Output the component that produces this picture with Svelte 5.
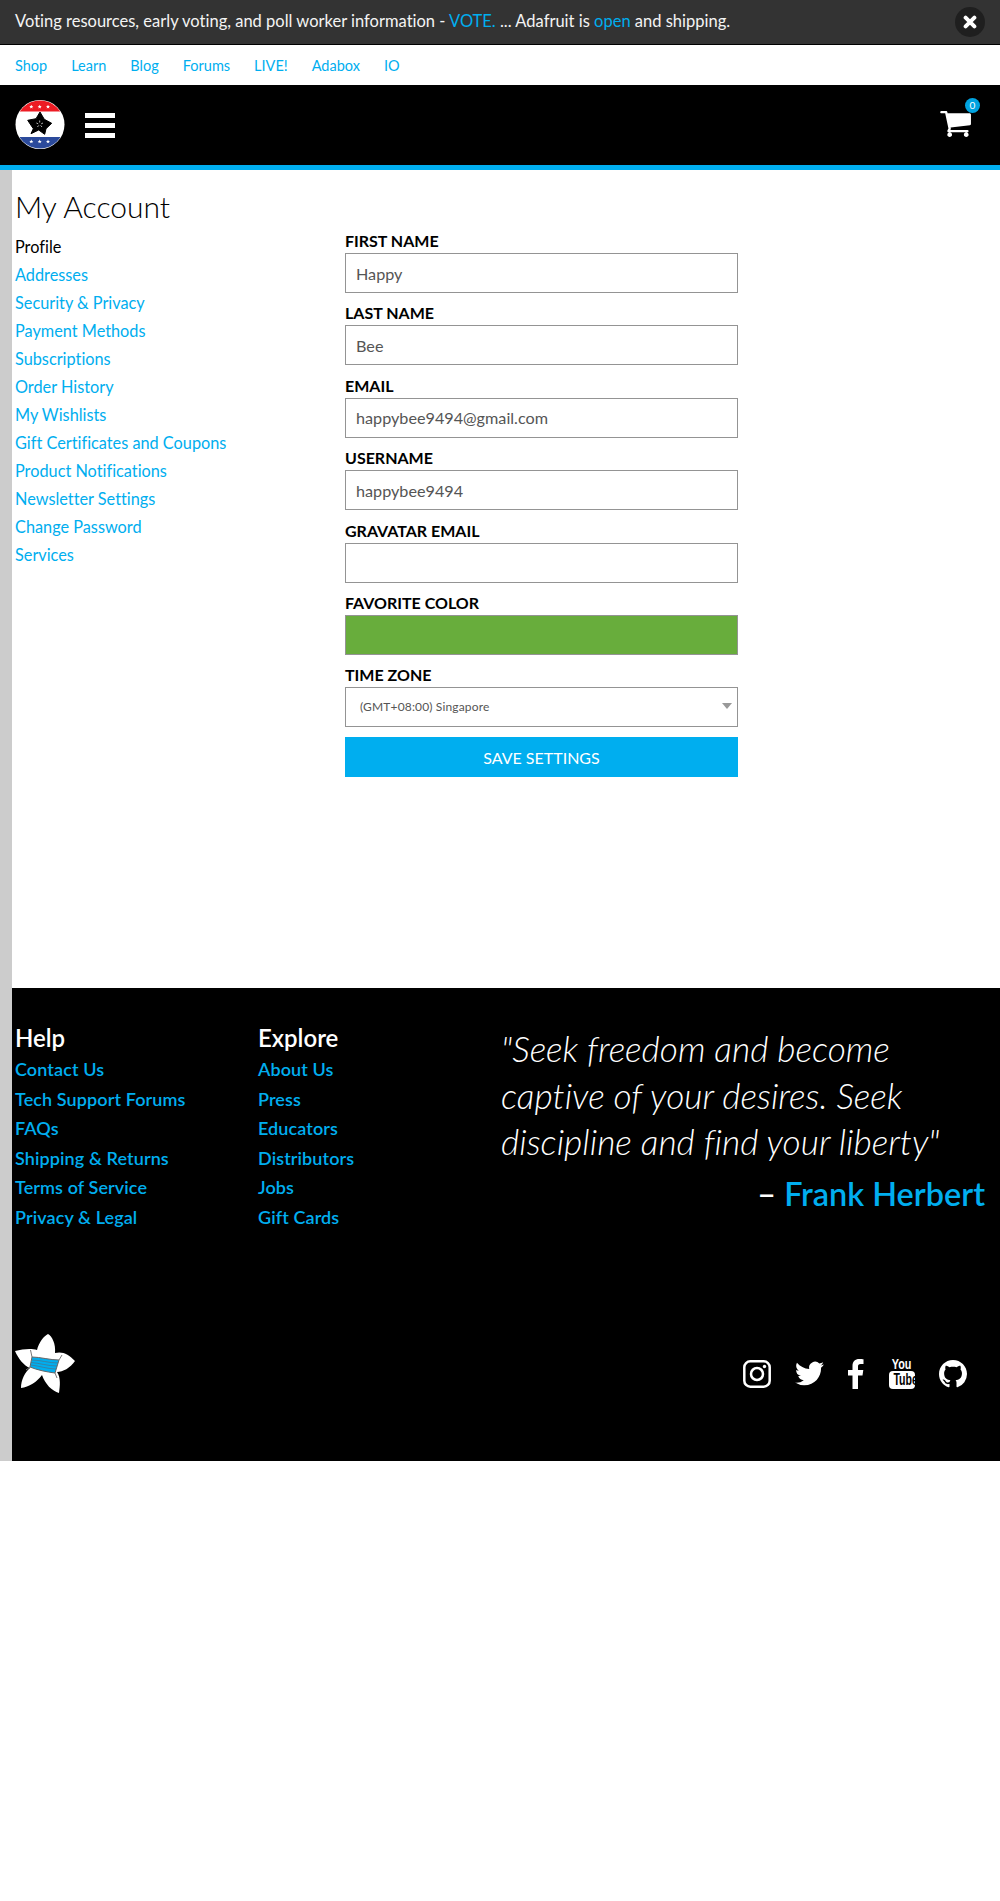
<script>
	const topLinks = ['Shop', 'Learn', 'Blog', 'Forums', 'LIVE!', 'Adabox', 'IO'];
	const accountLinks = ['Addresses', 'Security & Privacy', 'Payment Methods', 'Subscriptions', 'Order History', 'My Wishlists', 'Gift Certificates and Coupons', 'Product Notifications', 'Newsletter Settings', 'Change Password', 'Services'];
	const fields = [
		{ label: 'FIRST NAME', value: 'Happy' },
		{ label: 'LAST NAME', value: 'Bee' },
		{ label: 'EMAIL', value: 'happybee9494@gmail.com' },
		{ label: 'USERNAME', value: 'happybee9494' },
		{ label: 'GRAVATAR EMAIL', value: '' }
	];
	const help = ['Contact Us', 'Tech Support Forums', 'FAQs', 'Shipping & Returns', 'Terms of Service', 'Privacy & Legal'];
	const explore = ['About Us', 'Press', 'Educators', 'Distributors', 'Jobs', 'Gift Cards'];
	// little stars on the badge bands
	const badgeStars = [[16.3, 6.7], [24.7, 6.7], [33, 6.7], [16.3, 41.5], [24.7, 41.5], [33, 41.5]];
</script>

<div class="banner">
	<p>Voting resources, early voting, and poll worker information - <a href="#vote">VOTE.</a> ... Adafruit is <a href="#open">open</a> and shipping.</p>
	<button class="close" aria-label="Close">
		<svg viewBox="0 0 16 16" width="14" height="14"><path d="M3 3 L13 13 M13 3 L3 13" stroke="#fff" stroke-width="4.500" stroke-linecap="round" /></svg>
	</button>
</div>

<nav class="top-nav">
	{#each topLinks as link}
		<a href="#top">{link}</a>
	{/each}
</nav>

<header class="header">
	<svg class="badge" viewBox="0 0 50 50" width="50" height="50">
		<defs><clipPath id="disc"><circle cx="25" cy="24.500" r="24" /></clipPath></defs>
		<circle cx="25" cy="24.500" r="24.500" fill="#fff" />
		<g clip-path="url(#disc)">
			<rect width="50" height="11.500" fill="#ed1c24" />
			<rect y="37" width="50" height="13" fill="#2b4a9b" />
		</g>
		{#each badgeStars as [x, y]}
			<polygon transform="translate({x} {y})" fill="#fff" points="0,-2 .6,-.6 2,-.6 .9,.4 1.300,1.800 0,1 -1.300,1.800 -.9,.4 -2,-.6 -.6,-.6" />
		{/each}
		<path d="M25 12 L29.300 19.300 L36.700 23.300 L31 28.700 L29.700 34.300 L23.700 30 L16 33.700 L18.300 28.700 L12.700 20.300 L21 18.700 Z" fill="#000" stroke="#000" stroke-width="1" stroke-linejoin="round" />
		<path d="M24.700 20.500 V22.500 M28 23 L26.200 23.800 M27 27 L25.600 25.400 M22.400 27 L23.800 25.400 M21.400 23 L23.200 23.800" fill="none" stroke="#fff" stroke-width=".7" />
	</svg>
	<div class="burger"><span></span><span></span><span></span></div>
	<div class="cart">
		<svg viewBox="0 256 1728 1408" width="32" height="26"><path fill="#fff" d="M704 1536q0 52-38 90t-90 38-90-38-38-90 38-90 90-38 90 38 38 90zm896 0q0 52-38 90t-90 38-90-38-38-90 38-90 90-38 90 38 38 90zm128-1088v512q0 24-16.500 42.500t-40.500 21.500l-1044 122q13 60 13 70 0 16-24 64h920q26 0 45 19t19 45-19 45-45 19h-1024q-26 0-45-19t-19-45q0-11 8-31.500t16-36 21.500-40 15.500-29.500l-177-823h-204q-26 0-45-19t-19-45 19-45 45-19h256q16 0 28.500 6.500t19.500 15.500 13 24.500 8 26 5.500 29.500 4.500 26h1201q26 0 45 19t19 45z" /></svg>
		<span class="count">0</span>
	</div>
</header>

<div class="page">
	<main class="account">
		<h1>My Account</h1>
		<div class="columns">
			<ul class="side">
				<li class="current">Profile</li>
				{#each accountLinks as link}
					<li><a href="#account">{link}</a></li>
				{/each}
			</ul>
			<form class="form">
				{#each fields as field}
					<div class="field">
						<label>{field.label}<input value={field.value} /></label>
					</div>
				{/each}
				<div class="field">
					<span class="label">FAVORITE COLOR</span>
					<div class="swatch"></div>
				</div>
				<div class="field">
					<span class="label">TIME ZONE</span>
					<div class="select">(GMT+08:00) Singapore<i class="arrow"></i></div>
				</div>
				<button type="button" class="save">SAVE SETTINGS</button>
			</form>
		</div>
	</main>

	<footer class="footer">
		<div class="foot-top">
			<div class="foot-col">
				<h3>Help</h3>
				{#each help as link}<a href="#help">{link}</a>{/each}
			</div>
			<div class="foot-col">
				<h3>Explore</h3>
				{#each explore as link}<a href="#explore">{link}</a>{/each}
			</div>
			<div class="quote">
				<p>"Seek freedom and become captive of your desires. Seek discipline and find your liberty"</p>
				<div class="author">– <a href="#herbert">Frank Herbert</a></div>
			</div>
		</div>
		<div class="foot-bottom">
			<svg class="flower" viewBox="0 0 60 60" width="60" height="60">
				<path d="M22 16 C24 8 29 2 33 0 C37 2 41 10 40 19 C47 17 54 20 60 27 C55 34 48 38 42 38 C46 44 45 52 44 59 C37 57 30 50 27 41 C22 48 14 53 6 54 C6 46 10 38 15 34 C9 32 3 24 0 17 C8 15 16 14 22 16 Z" fill="#fff" />
				<path d="M17 23 L15.500 16 M44 26 L47 21 M15 33 L11 36 M40 39 L42 44" fill="none" stroke="#777" stroke-width="1" />
				<path d="M17 23 C25 23 35 26 44 26 L40 39 C32 38 22 36 15 33 Z" fill="#00aeef" stroke="#666" stroke-width="1" />
				<path d="M17 26 C25 26 34 29 43 29 M16 28.500 C24 29 33 32 42 32 M16 31 C24 32 33 35 41 35" fill="none" stroke="#567" stroke-width=".6" />
			</svg>
			<div class="social">
				<svg viewBox="0 0 28 28" width="28" height="28"><rect x="1.300" y="1.300" width="25.400" height="25.400" rx="6" fill="none" stroke="#fff" stroke-width="2.500" /><circle cx="14" cy="14" r="6" fill="none" stroke="#fff" stroke-width="2.500" /><circle cx="21.500" cy="6.500" r="1.700" fill="#fff" /></svg>
				<svg viewBox="0 0 24 24" width="29" height="29"><path fill="#fff" d="M23.950 4.570a10 10 0 0 1-2.820.77 4.960 4.960 0 0 0 2.160-2.720c-.95.550-2 .95-3.130 1.180a4.920 4.920 0 0 0-8.380 4.480C7.690 8.090 4.070 6.130 1.640 3.160a4.820 4.820 0 0 0-.67 2.480c0 1.710.87 3.210 2.190 4.090a4.900 4.900 0 0 1-2.230-.62v.06a4.920 4.920 0 0 0 3.950 4.830 5 5 0 0 1-2.210.08 4.940 4.940 0 0 0 4.600 3.420A9.870 9.870 0 0 1 0 19.540a14 14 0 0 0 7.560 2.210c9.050 0 14-7.500 14-13.980 0-.21 0-.42-.02-.63a9.940 9.940 0 0 0 2.410-2.570z" /></svg>
				<svg viewBox="0 0 16 30" width="16" height="30"><path fill="#fff" d="M4.500 30 V16.500 H0 V11 H4.500 V7 C4.500 2.500 7.200 0 11.200 0 C13 0 14.800.2 15.500.3 V5 H12.700 C10.500 5 10 6.100 10 7.600 V11 H15.300 L14.500 16.500 H10 V30 Z" /></svg>
				<div class="yt"><span class="you">You</span><div class="tube-box"><span class="tube">Tube</span></div></div>
				<svg viewBox="0 0 16 16" width="28" height="28"><path fill="#fff" d="M8 0C3.580 0 0 3.580 0 8c0 3.540 2.290 6.530 5.470 7.590.4.070.55-.17.55-.38 0-.19-.01-.82-.01-1.490-2.010.37-2.530-.49-2.690-.94-.09-.23-.48-.94-.82-1.130-.28-.15-.68-.52-.01-.53.630-.01 1.080.58 1.230.82.720 1.210 1.870.87 2.330.66.070-.52.280-.87.510-1.070-1.780-.2-3.640-.89-3.640-3.950 0-.87.310-1.590.820-2.150-.08-.2-.36-1.020.08-2.120 0 0 .67-.21 2.200.82.640-.18 1.320-.27 2-.27s1.360.09 2 .27c1.530-1.040 2.200-.82 2.200-.82.440 1.100.16 1.920.08 2.120.510.560.820 1.270.820 2.150 0 3.070-1.870 3.750-3.650 3.950.29.250.54.730.54 1.480 0 1.070-.01 1.930-.01 2.200 0 .21.150.46.550.38A8.010 8.010 0 0 0 16 8c0-4.420-3.580-8-8-8z" /></svg>
			</div>
		</div>
	</footer>
</div>

<style>
	:global(body) {
		background: #fff;
		font-family: Lato, 'Liberation Sans', sans-serif;
		font-variant-ligatures: none;
	}

	a {
		color: #00aeef;
		text-decoration: none;
	}

	.banner {
		display: flex;
		align-items: center;
		justify-content: space-between;
		box-sizing: border-box;
		height: 45px;
		padding: 0 15px;
		background: #333;
		border-bottom: 1px solid #000;
		color: #f4f4f4;
		font-size: 16.500px;
	}

	.banner p {
		margin: 0;
		padding-bottom: 2px;
	}

	.close {
		display: flex;
		align-items: center;
		justify-content: center;
		width: 30px;
		height: 30px;
		padding: 0;
		border: 0;
		border-radius: 50%;
		background: #1f1f1f;
	}

	.top-nav {
		display: flex;
		align-items: center;
		gap: 24px;
		height: 40px;
		padding: 0 15px;
		font-size: 14.500px;
	}

	.header {
		display: flex;
		align-items: center;
		box-sizing: border-box;
		height: 85px;
		padding: 0 15px;
		background: #000;
		border-bottom: 5px solid #00aeef;
	}

	.burger {
		display: flex;
		flex-direction: column;
		gap: 5px;
		margin-left: 20px;
	}

	.burger span {
		width: 30px;
		height: 5px;
		background: #fff;
	}

	.cart {
		position: relative;
		display: flex;
		margin-left: auto;
		margin-right: 14px;
		margin-top: -2px;
	}

	.count {
		position: absolute;
		top: -13px;
		right: -9px;
		width: 15px;
		height: 15px;
		border-radius: 50%;
		background: #00a3e0;
		color: #fff;
		font-size: 10px;
		line-height: 15px;
		text-align: center;
	}

	.page {
		border-left: 12px solid #ccc;
	}

	.account {
		box-sizing: border-box;
		height: 818px;
		padding: 18px 3px 0;
	}

	h1 {
		margin: 0 0 9px;
		font-size: 30px;
		font-weight: 300;
		line-height: 36px;
		color: #000;
	}

	.columns {
		display: flex;
	}

	.side {
		width: 330px;
		margin: 0;
		padding: 0;
		list-style: none;
		font-size: 16.300px;
		line-height: 28px;
	}

	.current {
		color: #000;
	}

	.form {
		width: 393px;
		margin-top: -3px;
	}

	.field {
		margin-bottom: 9.400px;
	}

	label,
	.label {
		display: block;
		box-sizing: border-box;
		height: 23px;
		font-size: 16px;
		font-weight: 700;
		line-height: 21px;
		color: #000;
	}

	label {
		height: auto;
	}

	label input {
		margin-top: 2px;
	}

	input,
	.select,
	.swatch {
		display: block;
		box-sizing: border-box;
		width: 100%;
		height: 40px;
		border: 1px solid #949494;
		background: #fff;
	}

	input {
		padding: 0 10px;
		color: #555;
		font: 16.200px Lato, sans-serif;
		border-radius: 0;
	}

	.swatch {
		background: #68ad3c;
	}

	.select {
		position: relative;
		padding-left: 14px;
		color: #555;
		font-size: 12px;
		line-height: 38px;
		letter-spacing: .15px;
	}

	.arrow {
		position: absolute;
		top: 15px;
		right: 5px;
		border: 5px solid transparent;
		border-top: 6px solid #999;
		border-bottom: 0;
	}

	.save {
		display: block;
		width: 100%;
		height: 40px;
		margin-top: 10px;
		border: 0;
		background: #00aeef;
		color: #fff;
		font: 16px Lato, sans-serif;
	}

	.footer {
		box-sizing: border-box;
		height: 473px;
		padding: 34px 15px 0 3px;
		background: #000;
		color: #fff;
	}

	.foot-top {
		display: flex;
		height: 312px;
	}

	.foot-col {
		display: flex;
		flex-direction: column;
		width: 243px;
		font-size: 18px;
		font-weight: 600;
		line-height: 29.600px;
		letter-spacing: .1px;
	}

	.foot-col h3 {
		margin: 0 0 1px;
		font-size: 24px;
		font-weight: 600;
		line-height: 32px;
		letter-spacing: 0;
	}

	.quote {
		flex: 1;
		padding-top: 4px;
	}

	.quote p {
		margin: 0;
		font-size: 35.300px;
		font-style: italic;
		font-weight: 300;
		line-height: 46.500px;
	}

	.author {
		margin-top: 8px;
		font-size: 32.400px;
		font-weight: 600;
		line-height: 40px;
		text-align: right;
	}

	.foot-bottom {
		display: flex;
		align-items: flex-start;
		justify-content: space-between;
	}

	.social {
		display: flex;
		align-items: center;
		gap: 24px;
		margin-top: 24px;
		margin-right: 18px;
	}

	.yt {
		display: flex;
		flex-direction: column;
		align-items: center;
		width: 27px;
		font-family: 'Liberation Sans', sans-serif;
		font-weight: 700;
	}

	.you {
		font-size: 15px;
		line-height: 12px;
		transform: scaleX(.72);
	}

	.tube-box {
		width: 26px;
		height: 18px;
		margin-top: 1px;
		border-radius: 4px;
		background: #fff;
		color: #000;
		text-align: center;
	}

	.tube {
		display: block;
		font-size: 16px;
		line-height: 18px;
		transform: scaleX(.66);
	}
</style>
